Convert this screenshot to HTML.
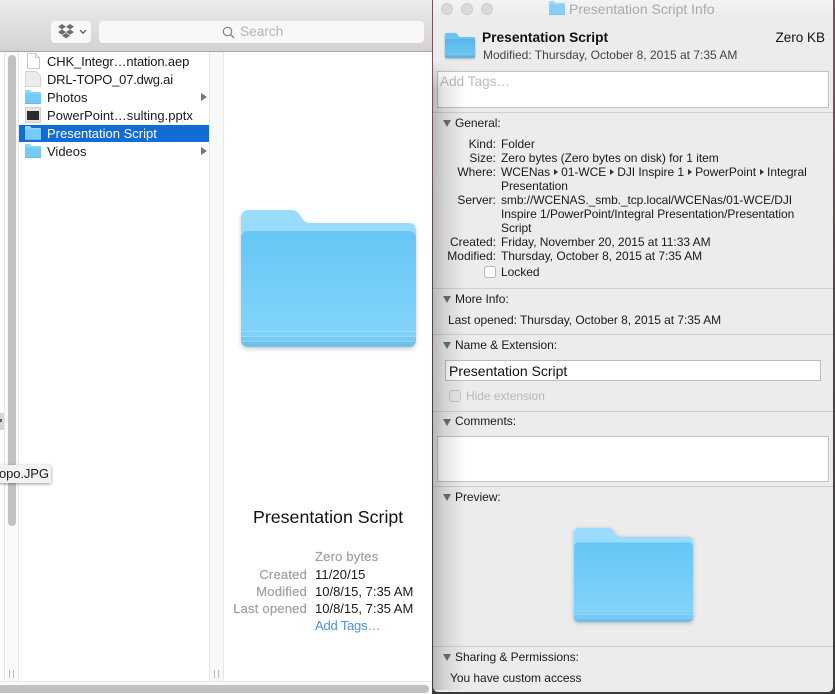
<!DOCTYPE html>
<html>
<head>
<meta charset="utf-8">
<style>
html,body{margin:0;padding:0}
body{width:835px;height:694px;position:relative;overflow:hidden;background:#4a3d3d;font-family:"Liberation Sans",sans-serif;color:#1a1a1a}
.a{position:absolute}
.t{position:absolute;white-space:nowrap;line-height:14px;font-size:12px;letter-spacing:-.04px}
.l{position:absolute;white-space:nowrap;line-height:14px;font-size:13px}
.r{position:absolute;white-space:nowrap;line-height:14px;font-size:12px;right:339px;text-align:right}
.sep{position:absolute;left:433px;width:400px;height:1px;background:#d0d0d0}
.tri{position:absolute;left:443px;width:0;height:0;border-left:4px solid transparent;border-right:4px solid transparent;border-top:7px solid #707070}
.g{color:#a3a1a3;-webkit-text-stroke:.25px #a3a1a3;letter-spacing:.2px}
svg{position:absolute;display:block}
.arr{position:absolute;left:201px;width:0;height:0;border-top:4px solid transparent;border-bottom:4px solid transparent;border-left:6px solid #777}
.p{display:inline-block;width:0;height:0;border-top:3px solid transparent;border-bottom:3px solid transparent;border-left:4px solid #333;margin:0 3.5px 1px 3.5px}
</style>
</head>
<body>
<svg width="0" height="0" style="position:absolute">
<defs>
<linearGradient id="fg" x1="0" y1="0" x2="0" y2="1"><stop offset="0" stop-color="#66c6f6"/><stop offset="1" stop-color="#86d6fc"/></linearGradient>
<linearGradient id="hg" x1="0" y1="0" x2="0" y2="1"><stop offset="0" stop-color="#58b6ea"/><stop offset="1" stop-color="#72c8f2"/></linearGradient>
<clipPath id="fc"><path d="M0 29Q0 21 8 21H167Q175 21 175 29V129Q175 137 167 137H8Q0 137 0 129Z"/></clipPath>
<symbol id="folder" viewBox="0 0 175 137" preserveAspectRatio="none">
<path d="M0 8Q0 0 8 0H50Q55 0 58 4L62 10Q65 13 70 13H167Q175 13 175 21V129Q175 137 167 137H8Q0 137 0 129Z" fill="#99dcfe"/>
<g clip-path="url(#fc)">
<rect x="0" y="21" width="175" height="116" fill="url(#fg)"/>
<rect x="0" y="121" width="175" height="5" fill="#7fd0f7"/>
<rect x="0" y="126" width="175" height="5" fill="#77c9f1"/>
<rect x="0" y="131" width="175" height="6" fill="#6cc0ea"/>
<rect x="0" y="121" width="175" height="1" fill="#95dafa"/>
<rect x="0" y="126" width="175" height="1" fill="#95dafa"/>
<rect x="0" y="131" width="175" height="1" fill="#8ad3f5"/>
</g>
</symbol>
<symbol id="mini" viewBox="0 0 16 14" preserveAspectRatio="none">
<path d="M0 1Q0 0 1 0H5L6.5 2H15Q16 2 16 3V13Q16 14 15 14H1Q0 14 0 13Z" fill="#8ed6fb"/>
<path d="M0 3.5H16V13Q16 14 15 14H1Q0 14 0 13Z" fill="#74cbf7"/>
<rect x="0" y="13.3" width="16" height=".7" fill="#5fb4df"/>
</symbol>
<symbol id="head" viewBox="0 0 30 25" preserveAspectRatio="none">
<path d="M0 2Q0 0 2 0H10Q11 0 12 1L13.5 3Q14 4 15 4H28Q30 4 30 6V23Q30 25 28 25H2Q0 25 0 23Z" fill="#6ec4f0"/>
<path d="M0 7Q0 6 1 6H29Q30 6 30 7V23Q30 25 28 25H2Q0 25 0 23Z" fill="url(#hg)"/>
<path d="M0 23Q0 25 2 25H28Q30 25 30 23V22.5H0Z" fill="#5eb2de"/>
</symbol>
</defs>
</svg>

<!-- desktop backdrop -->
<div class="a" style="left:431px;top:0;width:404px;height:694px;background:linear-gradient(180deg,#7f4f63 0,#7a5060 90px,#5a4a4a 220px,#4a4040 400px,#3a3a3a 694px)"></div>

<!-- Finder window -->
<div class="a" style="left:0;top:0;width:432px;height:694px;background:#fff"></div>
<div class="a" style="left:0;top:0;width:432px;height:52px;background:linear-gradient(180deg,#ecebec 0,#d3d1d3 100%);border-bottom:1px solid #a8a6a8;box-sizing:border-box"></div>

<div class="a" style="left:51px;top:21px;width:40px;height:22px;background:#f8f8f8;border-radius:4px"></div>
<svg style="left:58px;top:24px" width="16" height="15" viewBox="0 0 16 15"><g fill="#6c6c6c"><path d="M4 0 8 2.7 4 5.4 0 2.7Z"/><path d="M12 0 16 2.7 12 5.4 8 2.7Z"/><path d="M4 5.4 8 8.1 4 10.8 0 8.1Z"/><path d="M12 5.4 16 8.1 12 10.8 8 8.1Z"/><path d="M8 9 12 11.6 8 14.4 4 11.6Z"/></g></svg>
<svg style="left:79px;top:29px" width="8" height="6" viewBox="0 0 8 6"><path d="M1 1 4 4.2 7 1" fill="none" stroke="#555" stroke-width="1.2"/></svg>

<div class="a" style="left:99px;top:21px;width:325px;height:22px;background:#f8f8f8;border-radius:4px"></div>
<svg style="left:222px;top:26px" width="13" height="13" viewBox="0 0 13 13"><circle cx="5.5" cy="5.5" r="4.2" fill="none" stroke="#7c7c7c" stroke-width="1.1"/><path d="M8.6 8.6 12 12" stroke="#7c7c7c" stroke-width="1.3"/></svg>
<div class="l" style="left:240px;top:25px;font-size:13.7px;color:#b4b4b4">Search</div>

<!-- column chrome -->
<div class="a" style="left:4px;top:52px;width:1px;height:630px;background:#e6e6e6"></div>
<div class="a" style="left:5px;top:52px;width:13px;height:630px;background:#f9f9f9"></div>
<div class="a" style="left:18px;top:52px;width:1px;height:630px;background:#e6e6e6"></div>
<div class="a" style="left:8px;top:55px;width:8px;height:471px;background:#c1c1c1;border-radius:4px"></div>
<div class="a" style="left:209px;top:52px;width:1px;height:630px;background:#e6e6e6"></div>
<div class="a" style="left:210px;top:52px;width:13px;height:630px;background:#f9f9f9"></div>
<div class="a" style="left:223px;top:52px;width:1px;height:630px;background:#e6e6e6"></div>
<div class="a" style="left:9px;top:670px;width:3px;height:8px;border-left:1px solid #bbb;border-right:1px solid #bbb"></div>
<div class="a" style="left:214px;top:670px;width:3px;height:8px;border-left:1px solid #bbb;border-right:1px solid #bbb"></div>

<div class="a" style="left:0;top:413px;width:4px;height:17px;background:#d6d6d6"></div>
<div class="a" style="left:0;top:419px;width:2px;height:3px;background:#666"></div>

<!-- list -->
<div class="a" style="left:19px;top:125px;width:190px;height:17px;background:#126cd6"></div>
<svg style="left:27px;top:53px" width="13" height="16" viewBox="0 0 13 16"><path d="M.5.5H8.5L12.5 4.5V15.5H.5Z" fill="#fff" stroke="#c8c8c8"/><path d="M8.5.5V4.5H12.5" fill="none" stroke="#c8c8c8"/></svg>
<svg style="left:25px;top:71px" width="16" height="16" viewBox="0 0 16 16"><path d="M.5.5H11L15.5 5V15.5H.5Z" fill="#ececf0" stroke="#d4d4d4"/></svg>
<svg style="left:25px;top:90px" width="16" height="14"><use href="#mini" width="16" height="14"/></svg>
<div class="a" style="left:25px;top:107px;width:16px;height:16px;background:#e4e4e4;box-sizing:border-box;border:1px solid #d0d0d0"></div>
<div class="a" style="left:27px;top:111px;width:12px;height:9px;background:#2c2c2c"></div>
<svg style="left:25px;top:126px" width="16" height="14"><use href="#mini" width="16" height="14"/></svg>
<svg style="left:25px;top:144px" width="16" height="14"><use href="#mini" width="16" height="14"/></svg>

<div class="l" style="left:47px;top:55px;letter-spacing:-.14px">CHK_Integr…ntation.aep</div>
<div class="l" style="left:47px;top:73px;letter-spacing:-.22px">DRL-TOPO_07.dwg.ai</div>
<div class="l" style="left:47px;top:91px">Photos</div>
<div class="l" style="left:47px;top:109px;letter-spacing:.03px">PowerPoint…sulting.pptx</div>
<div class="l" style="left:47px;top:127px;color:#fff">Presentation Script</div>
<div class="l" style="left:47px;top:145px">Videos</div>
<div class="arr" style="top:93px"></div>
<div class="arr" style="top:147px"></div>

<!-- tooltip -->
<div class="a" style="left:-4px;top:465px;width:55px;height:18px;background:#f2f2f2;box-shadow:0 1px 3px rgba(0,0,0,.4)"></div>
<div class="l" style="left:-1px;top:467px;letter-spacing:-.1px">opo.JPG</div>

<!-- preview -->
<svg style="left:241px;top:210px;filter:drop-shadow(0 2px 2px rgba(0,0,0,.2))" width="175" height="137"><use href="#folder" width="175" height="137"/></svg>
<div class="l" style="left:253px;top:508px;font-size:17.8px;line-height:18px;color:#111">Presentation Script</div>
<div class="l g" style="left:315px;top:550px">Zero bytes</div>
<div class="l g" style="right:528px;top:568px">Created</div>
<div class="l g" style="right:528px;top:585px">Modified</div>
<div class="l g" style="right:528px;top:602px">Last opened</div>
<div class="l" style="left:315px;top:568px;letter-spacing:.1px">11/20/15</div>
<div class="l" style="left:315px;top:585px">10/8/15, 7:35 AM</div>
<div class="l" style="left:315px;top:602px">10/8/15, 7:35 AM</div>
<div class="l" style="left:315px;top:619px;color:#4a90e8;letter-spacing:-.2px">Add Tags…</div>

<!-- bottom scrollbar -->
<div class="a" style="left:0;top:681px;width:432px;height:1px;background:#e6e6e6"></div>
<div class="a" style="left:0;top:682px;width:432px;height:12px;background:#f9f9f9"></div>
<div class="a" style="left:-6px;top:685px;width:435px;height:8px;background:#c1c1c1;border-radius:4px"></div>

<!-- Info window -->
<div class="a" style="left:433px;top:0;width:400px;height:692px;background:#ececec;border-radius:0 0 5px 5px;overflow:hidden">
  <div class="a" style="left:0;top:0;width:400px;height:16px;background:linear-gradient(180deg,#f4f3f4,#eeedee)"></div>
  <div class="a" style="left:8px;top:3px;width:12px;height:12px;box-sizing:border-box;border-radius:50%;background:#dadada;border:1px solid #cccccc"></div>
  <div class="a" style="left:28px;top:3px;width:12px;height:12px;box-sizing:border-box;border-radius:50%;background:#dadada;border:1px solid #cccccc"></div>
  <div class="a" style="left:48px;top:3px;width:12px;height:12px;box-sizing:border-box;border-radius:50%;background:#dadada;border:1px solid #cccccc"></div>
</div>
<svg style="left:549px;top:1px;opacity:.85" width="16" height="14"><use href="#mini" width="16" height="14"/></svg>
<div class="l" style="left:569px;top:2px;font-size:14px;color:#a9a9a9">Presentation Script Info</div>

<svg style="left:445px;top:33px;filter:drop-shadow(0 1px 1px rgba(0,0,0,.25))" width="30" height="25"><use href="#head" width="30" height="25"/></svg>
<div class="l" style="left:482px;top:31px;font-size:13.75px;font-weight:bold;color:#111">Presentation Script</div>
<div class="l" style="right:10px;top:31px;font-size:13.5px;color:#111">Zero KB</div>
<div class="t" style="left:483px;top:48px;color:#444;letter-spacing:0">Modified: Thursday, October 8, 2015 at 7:35 AM</div>

<div class="a" style="left:437px;top:71px;width:392px;height:37px;background:#fff;border:1px solid #c2c2c2;box-sizing:border-box"></div>
<div class="l" style="left:440px;top:75px;font-size:13.6px;color:#bdbdbd">Add Tags…</div>

<div class="sep" style="top:112px"></div>
<div class="tri" style="top:120px"></div>
<div class="t" style="left:455px;top:116px">General:</div>

<div class="r" style="top:137px">Kind:</div><div class="t" style="left:501px;top:137px">Folder</div>
<div class="r" style="top:151px">Size:</div><div class="t" style="left:501px;top:151px">Zero bytes (Zero bytes on disk) for 1 item</div>
<div class="r" style="top:165px">Where:</div><div class="t" style="left:501px;top:165px">WCENas<i class="p"></i>01-WCE<i class="p"></i>DJI Inspire 1<i class="p"></i>PowerPoint<i class="p"></i>Integral</div>
<div class="t" style="left:501px;top:179px">Presentation</div>
<div class="r" style="top:193px">Server:</div><div class="t" style="left:501px;top:193px;letter-spacing:-.08px">smb://WCENAS._smb._tcp.local/WCENas/01-WCE/DJI</div>
<div class="t" style="left:501px;top:207px">Inspire 1/PowerPoint/Integral Presentation/Presentation</div>
<div class="t" style="left:501px;top:221px">Script</div>
<div class="r" style="top:235px">Created:</div><div class="t" style="left:501px;top:235px">Friday, November 20, 2015 at 11:33 AM</div>
<div class="r" style="top:249px">Modified:</div><div class="t" style="left:501px;top:249px">Thursday, October 8, 2015 at 7:35 AM</div>
<div class="a" style="left:484px;top:266px;width:12px;height:12px;background:#fff;border:1px solid #b4b4b4;border-radius:3px;box-sizing:border-box"></div>
<div class="t" style="left:501px;top:265px">Locked</div>

<div class="sep" style="top:288px"></div>
<div class="tri" style="top:296px"></div>
<div class="t" style="left:455px;top:292px">More Info:</div>
<div class="t" style="left:448px;top:313px">Last opened: Thursday, October 8, 2015 at 7:35 AM</div>

<div class="sep" style="top:334px"></div>
<div class="tri" style="top:342px"></div>
<div class="t" style="left:455px;top:338px">Name &amp; Extension:</div>
<div class="a" style="left:445px;top:360px;width:376px;height:21px;background:#fff;border:1px solid #bdbdbd;box-sizing:border-box"></div>
<div class="l" style="left:449px;top:364px;font-size:14px;color:#111">Presentation Script</div>
<div class="a" style="left:449px;top:390px;width:12px;height:12px;border:1px solid #c8c8c8;border-radius:3px;box-sizing:border-box;background:#e8e8e8"></div>
<div class="t" style="left:466px;top:389px;color:#b8b8b8">Hide extension</div>

<div class="sep" style="top:411px"></div>
<div class="tri" style="top:419px"></div>
<div class="t" style="left:455px;top:414px">Comments:</div>
<div class="a" style="left:437px;top:436px;width:392px;height:46px;background:#fff;border:1px solid #c2c2c2;box-sizing:border-box"></div>

<div class="sep" style="top:486px"></div>
<div class="tri" style="top:494px"></div>
<div class="t" style="left:455px;top:490px">Preview:</div>

<svg style="left:574px;top:528px;filter:drop-shadow(0 1px 2px rgba(0,0,0,.25))" width="119" height="94"><use href="#folder" width="119" height="94"/></svg>

<div class="sep" style="top:646px"></div>
<div class="tri" style="top:654px"></div>
<div class="t" style="left:455px;top:650px">Sharing &amp; Permissions:</div>
<div class="t" style="left:450px;top:671px">You have custom access</div>

<!-- shadow over left edge of info window -->
<div class="a" style="left:433px;top:60px;width:32px;height:630px;background:linear-gradient(90deg,rgba(0,0,0,.22),rgba(0,0,0,.1) 35%,rgba(0,0,0,0));-webkit-mask-image:linear-gradient(180deg,transparent 0,#000 30px)"></div>
</body>
</html>
